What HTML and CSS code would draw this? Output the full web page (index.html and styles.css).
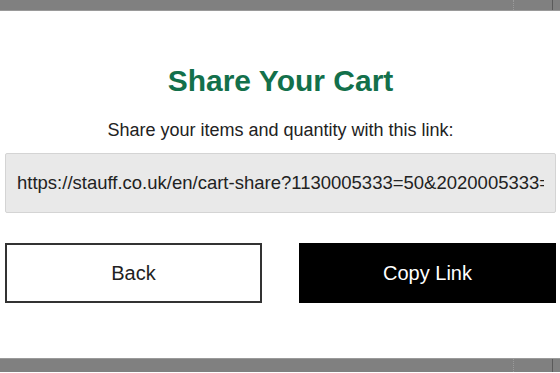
FILE: index.html
```html
<!DOCTYPE html>
<html lang="en">
	<head>
		<meta charset="UTF-8" />
		<meta name="viewport" content="width=device-width, initial-scale=1.0" />
		<title>Share Your Cart</title>
		<link rel="stylesheet" href="styles.css">
	</head>

	<body>
		<div class="overlay top">
			<span class="rule"></span>
			<span class="edge"></span>
		</div>
		<div class="modal">
			<h2 class="title">Share Your Cart</h2>
			<p class="desc">Share your items and quantity with this link:</p>
			<input type="text" class="link" readonly value="https://stauff.co.uk/en/cart-share?1130005333=50&amp;2020005333=25" />
			<div class="actions">
				<button class="btn btn-back">Back</button>
				<button class="btn btn-copy">Copy Link</button>
			</div>
		</div>
		<div class="overlay bottom">
			<span class="rule"></span>
			<span class="edge"></span>
		</div>
	</body>
</html>
```

FILE: styles.css
```css
* {
	box-sizing: border-box;
	margin: 0;
	padding: 0;
}

html,
body {
	width: 560px;
	height: 373px;
	overflow: hidden;
	background: #fff;
	font-family: "Liberation Sans", Arial, sans-serif;
	color: #222;
}

.overlay {
	position: relative;
	background: #808080;
}

.top {
	height: 11px;
	border-bottom: 1px solid #9a9a9a;
}

.bottom {
	height: 14px;
	border-top: 1px solid #9a9a9a;
}

.rule {
	position: absolute;
	left: 513px;
	top: 0;
	bottom: 0;
	border-left: 1px dotted #9a9a9a;
}

.edge {
	position: absolute;
	left: 552px;
	top: 0;
	bottom: 0;
	border-left: 1px solid #5a5a5a;
}

.modal {
	height: 347px;
	padding: 53px 4px 0 5px;
	display: flex;
	flex-direction: column;
	align-items: center;
}

.title {
	font-size: 30px;
	font-weight: bold;
	color: #13704b;
	line-height: 34px;
}

.desc {
	margin-top: 21px;
	font-size: 18px;
	line-height: 22px;
	color: #222;
}

.link {
	margin-top: 12px;
	width: 551px;
	height: 60px;
	padding: 0 11px;
	background: #e9e9e9;
	border: 1px solid #d4d4d4;
	border-radius: 2px;
	font-family: "Liberation Sans", Arial, sans-serif;
	font-size: 18.5px;
	color: #222;
	outline: 0;
}

.actions {
	margin-top: 30px;
	width: 551px;
	display: flex;
	justify-content: space-between;
}

.btn {
	width: 257px;
	height: 60px;
	font-family: "Liberation Sans", Arial, sans-serif;
	font-size: 20px;
	cursor: pointer;
}

.btn-back {
	background: #fff;
	color: #222;
	border: 2px solid #333;
}

.btn-copy {
	background: #000;
	color: #fff;
	border: 1px solid #000;
}
```
